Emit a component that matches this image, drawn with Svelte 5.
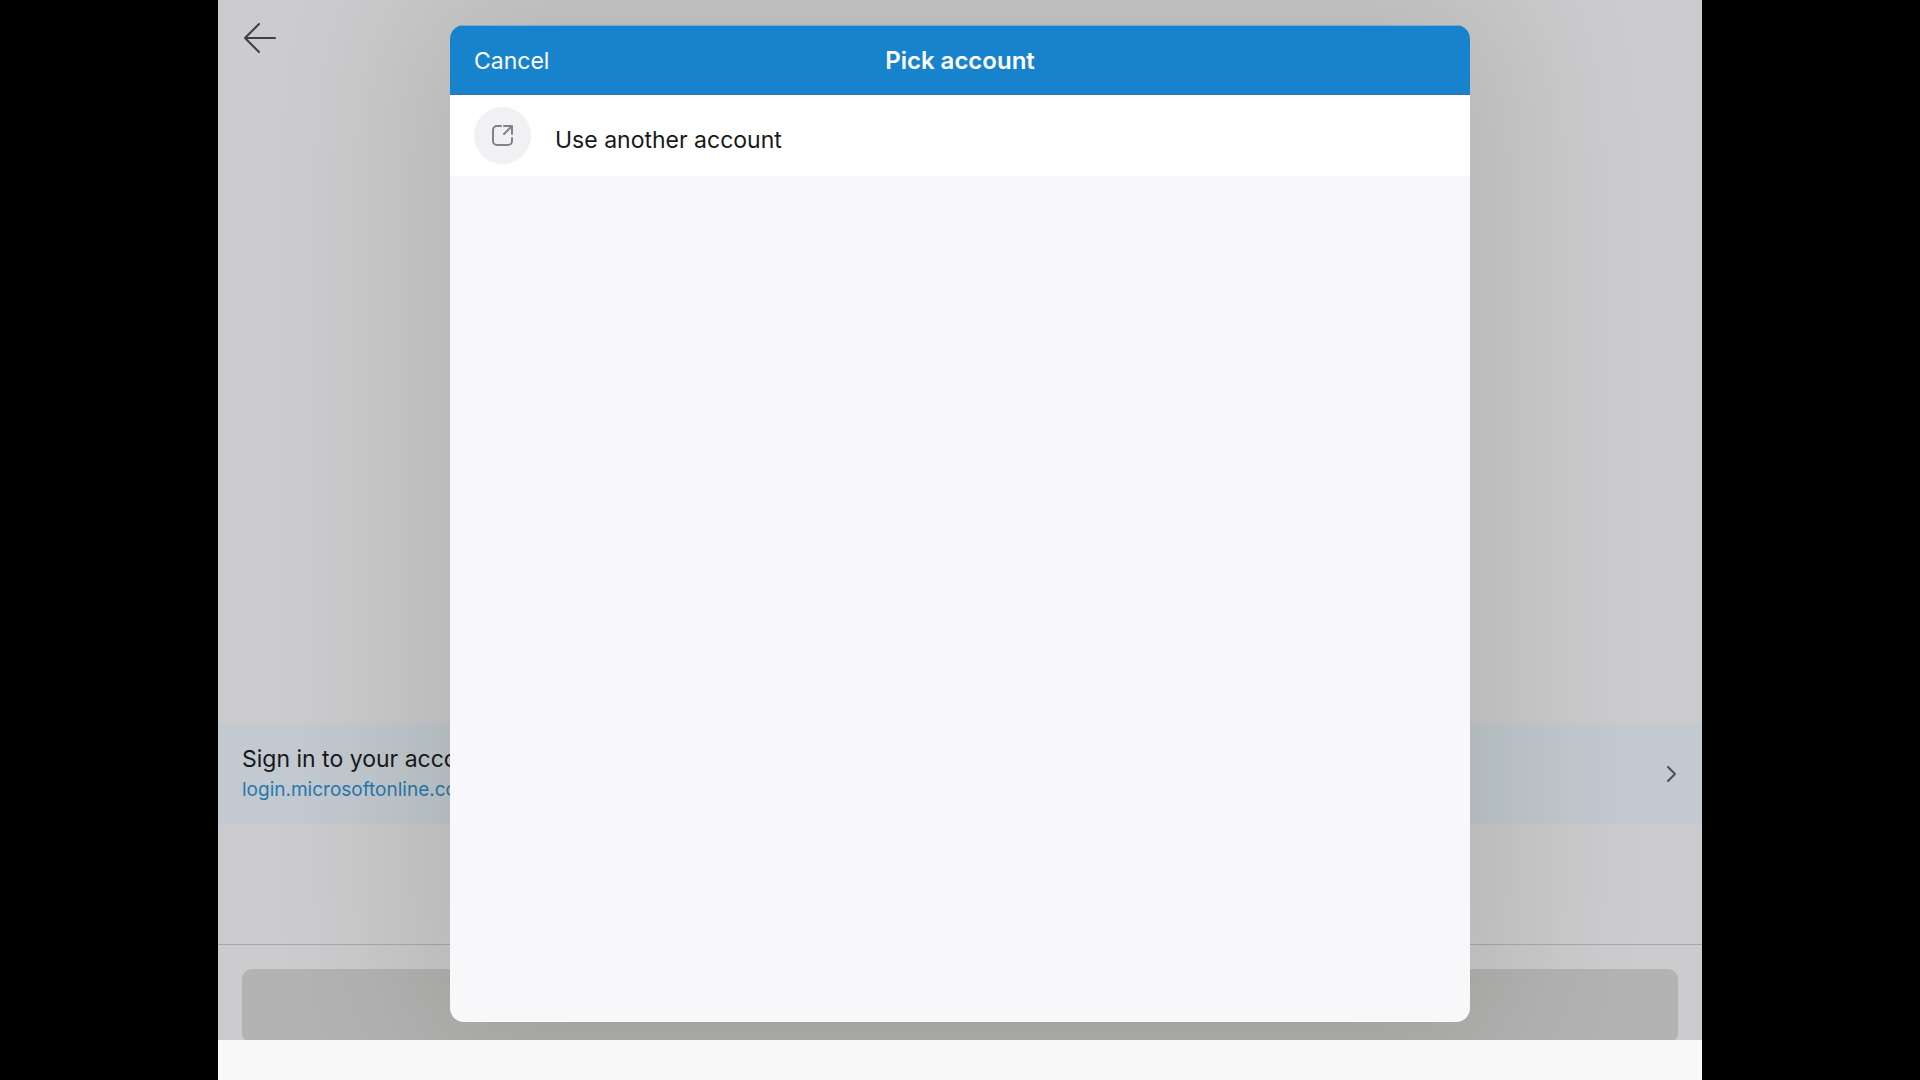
<script>
  const title = 'Pick account';
  const site = { name: 'Sign in to your account', host: 'login.microsoftonline.com' };
</script>

<div class="device">
  <div class="screen">
    <main class="page">
      <header class="toolbar">
        <button class="back" aria-label="Back">
          <svg width="34" height="32" viewBox="0 0 34 32" aria-hidden="true">
            <path d="M16 2 2 16l14 14M2 16h30" />
          </svg>
        </button>
      </header>

      <a class="site" href="#account">
        <span class="site-text">
          <span class="site-name">{site.name}</span>
          <span class="site-host">{site.host}</span>
        </span>
        <svg width="12" height="18" viewBox="0 0 12 18" aria-hidden="true">
          <path d="m2 2 7 7-7 7" />
        </svg>
      </a>

      <footer class="actions">
        <button class="action" aria-label="Continue" disabled></button>
      </footer>

      <div class="dialog" role="dialog" aria-labelledby="dialog-title">
        <header class="dialog-bar">
          <button class="cancel">Cancel</button>
          <h1 id="dialog-title">{title}</h1>
        </header>
        <button class="account">
          <span class="avatar">
            <svg width="22" height="22" viewBox="0 0 22 22" aria-hidden="true">
              <path d="M9 1H5a4 4 0 0 0-4 4v11a4 4 0 0 0 4 4h11a4 4 0 0 0 4-4v-3M12 1h8v8M20 1l-8 8" />
            </svg>
          </span>
          <span class="account-label">Use another account</span>
        </button>
      </div>
    </main>
    <div class="home-area"></div>
  </div>
</div>

<style>
  :global(body) {
    background: #000;
  }

  .device {
    box-sizing: border-box;
    min-height: 100vh;
    padding: 0 218px;
    display: flex;
    background: #000;
    font-family: Inter, 'Liberation Sans', sans-serif;
    font-size: 23px;
    line-height: 32px;
    color: #18181a;
  }

  button {
    margin: 0;
    padding: 0;
    border: 0;
    background: none;
    font: inherit;
    color: inherit;
    text-align: left;
  }

  svg {
    display: block;
    fill: none;
    stroke-linecap: round;
    stroke-linejoin: round;
  }

  .screen {
    flex: 1;
    display: flex;
    flex-direction: column;
  }

  .page {
    position: relative;
    flex: 1;
    display: flex;
    flex-direction: column;
    overflow: hidden;
    background: #cccbcd;
  }

  .home-area {
    height: 40px;
    background: #f9f9fa;
  }

  .toolbar {
    flex: 1;
    padding: 22px 25px;
  }

  .back svg {
    stroke: #404042;
    stroke-width: 2;
  }

  .site {
    display: flex;
    align-items: center;
    justify-content: space-between;
    padding: 20px 24px;
    background: #c2c9d0;
    color: inherit;
    text-decoration: none;
  }

  .site-text {
    display: flex;
    flex-direction: column;
  }

  .site-host {
    font-size: 19px;
    line-height: 29px;
    color: #2878ac;
  }

  .site svg {
    stroke: #4c4f54;
    stroke-width: 2;
  }

  .actions {
    margin-top: 120px;
    border-top: 1px solid #a9a9aa;
    padding: 24px 24px 0;
    height: 71px;
  }

  .action {
    display: block;
    width: 100%;
    height: 74px;
    border-radius: 10px;
    background: #b4b3b4;
  }

  .dialog {
    position: absolute;
    top: 25px;
    bottom: 18px;
    left: 50%;
    width: 1020px;
    max-width: 100%;
    transform: translateX(-50%);
    display: flex;
    flex-direction: column;
    overflow: hidden;
    border-radius: 14px;
    background: #f8f8fa;
    box-shadow: 0 0 150px 30px rgba(20, 40, 0, 0.14);
  }

  .dialog-bar {
    display: grid;
    grid-template-columns: 1fr auto 1fr;
    align-items: center;
    padding: 19px 24px 17px;
    background: #1883cd;
    color: #fff;
    border-top: 1px solid #6db0dc;
    border-bottom: 1px solid #3d76a5;
  }

  .dialog-bar h1 {
    margin: 0;
    font-size: 24px;
    line-height: 32px;
    font-weight: 600;
  }

  .account {
    display: flex;
    align-items: center;
    gap: 24px;
    padding: 12px 24px;
    background: #fff;
  }

  .avatar {
    display: grid;
    place-items: center;
    width: 57px;
    height: 57px;
    border-radius: 50%;
    background: #f1f0f2;
  }

  .avatar svg {
    stroke: #828284;
    stroke-width: 2;
  }

  .account-label {
    padding-top: 9px;
  }
</style>
